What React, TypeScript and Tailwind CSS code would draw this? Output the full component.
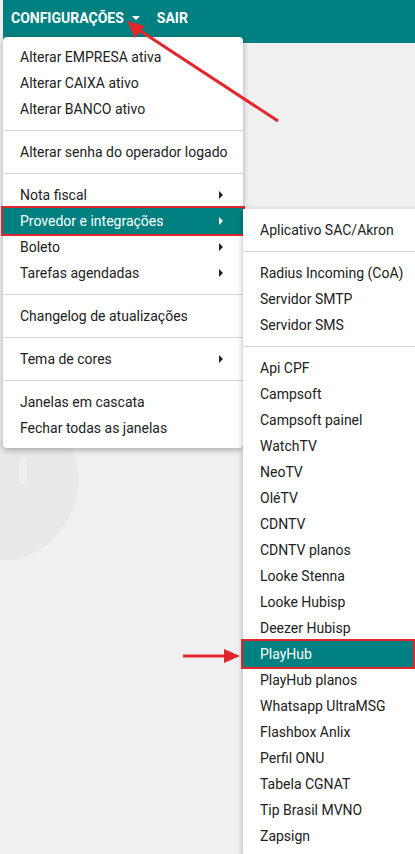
import React from "react";

type Entry = { label: string; sub?: boolean; active?: boolean } | "sep";

const mainMenu: Entry[] = [
  { label: "Alterar EMPRESA ativa" },
  { label: "Alterar CAIXA ativo" },
  { label: "Alterar BANCO ativo" },
  "sep",
  { label: "Alterar senha do operador logado" },
  "sep",
  { label: "Nota fiscal", sub: true },
  { label: "Provedor e integrações", sub: true, active: true },
  { label: "Boleto", sub: true },
  { label: "Tarefas agendadas", sub: true },
  "sep",
  { label: "Changelog de atualizações" },
  "sep",
  { label: "Tema de cores", sub: true },
  "sep",
  { label: "Janelas em cascata" },
  { label: "Fechar todas as janelas" },
];

const subMenu: Entry[] = [
  { label: "Aplicativo SAC/Akron" },
  "sep",
  { label: "Radius Incoming (CoA)" },
  { label: "Servidor SMTP" },
  { label: "Servidor SMS" },
  "sep",
  { label: "Api CPF" },
  { label: "Campsoft" },
  { label: "Campsoft painel" },
  { label: "WatchTV" },
  { label: "NeoTV" },
  { label: "OléTV" },
  { label: "CDNTV" },
  { label: "CDNTV planos" },
  { label: "Looke Stenna" },
  { label: "Looke Hubisp" },
  { label: "Deezer Hubisp" },
  { label: "PlayHub", active: true },
  { label: "PlayHub planos" },
  { label: "Whatsapp UltraMSG" },
  { label: "Flashbox Anlix" },
  { label: "Perfil ONU" },
  { label: "Tabela CGNAT" },
  { label: "Tip Brasil MVNO" },
  { label: "Zapsign" },
];

const MenuList: React.FC<{ items: Entry[]; activeClass?: string }> = ({
  items,
  activeClass = "",
}) => (
  <>
    {items.map((it, i) =>
      it === "sep" ? (
        <div key={i} className="my-2 h-px bg-[#d6d6d6]" />
      ) : (
        <div
          key={i}
          className={`relative flex h-[26px] items-center pl-[17px] pr-5 text-[14px] ${
            it.active
              ? `bg-[#008080] text-white outline-2 outline-[#e3262b] ${activeClass}`
              : "text-[#212121]"
          }`}
        >
          <span className="flex-1 whitespace-nowrap">{it.label}</span>
          {it.sub && (
            <span
              className={`h-0 w-0 border-y-[4px] border-l-[4px] border-y-transparent ${
                it.active ? "border-l-white" : "border-l-[#212121]"
              }`}
            />
          )}
        </div>
      )
    )}
  </>
);

export default function App() {
  return (
    <div
      className="relative h-[854px] w-full overflow-hidden bg-[#f0f0f0]"
      style={{ fontFamily: "Roboto, 'Liberation Sans', sans-serif" }}
    >
      {/* faint background logo */}
      <svg className="absolute left-0 top-[440px]" width="120" height="120">
        <circle cx="-4" cy="40" r="82" fill="#e9e9e9" />
        <rect x="19" y="18" width="8" height="26" rx="4" fill="#efefef" />
      </svg>

      <header className="ml-[3px] flex h-[43px] items-center gap-[17px] bg-[#008080] pb-[6px] pl-2 text-[14px] font-bold text-white">
        <div className="flex items-center gap-[8px]">
          <span>CONFIGURAÇÕES</span>
          <span className="-mt-[1px] h-0 w-0 border-x-[4px] border-t-[4px] border-x-transparent border-t-white" />
        </div>
        <span>SAIR</span>
      </header>

      <div className="absolute left-[3px] top-[37px] w-[240px] rounded bg-white py-[7px] shadow-[0_2px_6px_rgba(0,0,0,0.3)]">
        <MenuList items={mainMenu} />
      </div>

      <div className="absolute left-[243px] top-[209px] w-[180px] bg-white py-2 shadow-[0_2px_6px_rgba(0,0,0,0.3)]">
        <MenuList items={subMenu} activeClass="mr-[10px]" />
      </div>

      {/* annotation arrows */}
      <svg className="pointer-events-none absolute left-0 top-0" width="415" height="854">
        <line x1="278" y1="121" x2="139" y2="30" stroke="#e3262b" strokeWidth="3" />
        <polygon points="127,21 145,26 135,38" fill="#e3262b" />
        <line x1="183" y1="656" x2="226" y2="656" stroke="#e3262b" strokeWidth="3" />
        <polygon points="240,656 224,649 224,663" fill="#e3262b" />
      </svg>
    </div>
  );
}
